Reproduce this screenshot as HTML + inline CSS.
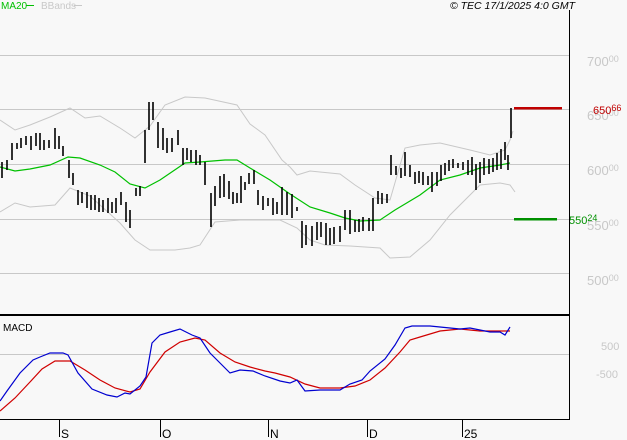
<!DOCTYPE html>
<html><head><meta charset="utf-8"><style>
html,body{margin:0;padding:0;background:#f8f8f8;}
svg{display:block;font-family:"Liberation Sans",sans-serif;}
</style></head><body>
<svg width="627" height="440" viewBox="0 0 627 440" xmlns="http://www.w3.org/2000/svg">
<rect width="627" height="440" fill="#f8f8f8"/>
<g stroke="#c8c8c8" stroke-width="1">
<line x1="0" y1="55.5" x2="569" y2="55.5"/>
<line x1="0" y1="109.5" x2="569" y2="109.5"/>
<line x1="0" y1="164.5" x2="569" y2="164.5"/>
<line x1="0" y1="219.5" x2="569" y2="219.5"/>
<line x1="0" y1="273.5" x2="569" y2="273.5"/>
<line x1="0" y1="354.5" x2="569" y2="354.5"/>
</g>
<g fill="#c8c8c8" font-size="13">
<text x="587" y="66">700<tspan font-size="9" dy="-4">00</tspan></text>
<text x="587" y="120">650<tspan font-size="9" dy="-4">00</tspan></text>
<text x="587" y="175">600<tspan font-size="9" dy="-4">00</tspan></text>
<text x="587" y="230">550<tspan font-size="9" dy="-4">00</tspan></text>
<text x="587" y="285">500<tspan font-size="9" dy="-4">00</tspan></text>
<text x="601" y="350" font-size="11">500</text>
<text x="596" y="378" font-size="11">-500</text>
</g>
<!-- bands -->
<polyline fill="none" stroke="#c8c8c8" stroke-width="1" points="0,120 15,130 30,125 50,117 70,108 85,118 100,116 120,128 135,138 150,126 165,105 185,97 205,98 237,105 250,124 265,135 282,160 290,167 297,175 310,171 340,174 355,185 375,198 390,200 405,148 420,145 440,143 470,150 490,155 505,150 510,140 513,131"/>
<polyline fill="none" stroke="#c8c8c8" stroke-width="1" points="0,212 15,203 30,207 55,205 70,188 90,196 100,205 120,223 135,240 150,250 175,250 190,248 200,245 215,222 240,220 280,220 297,228 310,240 325,245 350,246 380,248 390,258 410,257 430,240 450,215 465,200 480,185 500,183 510,185 515,192"/>
<polyline fill="none" stroke="#00c000" stroke-width="1.2" points="0,167 15,171 30,169 50,165 68,157 80,158 100,165 115,172 130,184 145,188 160,180 185,163 200,162 225,160 237,160 250,168 270,180 290,194 310,207 330,213 345,218 360,221 380,220 395,210 420,195 440,180 460,175 480,168 500,165 510,163"/>
<!-- bars -->
<path fill="none" stroke="#000" stroke-width="1.6" d="
M2 162V178M7 160V170M12 143V160M17 143V149M21 138V148M26 136V145M31 136V150M36 133V146M40 133V150M44 140V150M49 140V148M55 128V149M59 136V149M63 146V156M69 160V178M73 173V185M78 190V205M82 192V203M87 192V208M91 195V210M95 195V210M99 198V212M103 200V212M108 198V213M112 202V213M116 198V213M121 192V205M126 202V222M130 210V228M136 188V196M140 186V196M145 130V163M149 102V130M153 102V120M158 122V148M163 128V150M167 138V153M172 138V152M178 130V145M183 148V165M187 148V160M191 150V162M196 150V165M200 155V165M205 162V185M211 193V227M215 186V206M220 176V198M224 174V197M229 181V199M233 192V204M237 193V203M241 176V203M245 182V190M249 173V184M254 170V184M258 190V205M263 196V210M268 198V206M273 198V215M277 202V214M282 187V215M287 192V215M292 194V218M297 207V211M302 221V248M306 225V245M312 226V246M317 222V240M321 222V237M326 223V245M330 228V245M334 227V244M340 226V242M345 210V230M350 210V234M355 220V232M359 219V232M363 217V231M369 218V231M373 198V231M378 191V204M382 193V204M387 194V203M391 155V175M396 166V175M401 168V178M405 152V176M410 165V177M415 172V184M419 171V183M423 172V185M428 176V185M432 172V192M437 172V186M441 165V181M445 163V175M449 160V171M453 159V168M458 163V168M463 162V170M468 160V175M472 157V175M476 164V190M480 162V183M484 158V175M489 159V174M493 158V172M497 153V170M501 149V169M505 142V160M508 155V170M511 108V138"/>
<!-- price markers -->
<rect x="514" y="107" width="48" height="2.5" fill="#c00000"/>
<rect x="514" y="218" width="43" height="2.5" fill="#009000"/>
<text x="593" y="114" font-size="11" fill="#c00000">650<tspan font-size="9" dy="-3">66</tspan></text>
<text x="569" y="224" font-size="11" fill="#009000">550<tspan font-size="9" dy="-3">24</tspan></text>
<!-- frame -->
<line x1="569.5" y1="10" x2="569.5" y2="419" stroke="#000" stroke-width="1"/>
<rect x="0" y="314" width="570" height="2" fill="#000"/>
<line x1="0" y1="419.5" x2="570" y2="419.5" stroke="#000" stroke-width="1"/>
<g stroke="#000" stroke-width="1">
<line x1="59.5" y1="419" x2="59.5" y2="437"/>
<line x1="160.5" y1="419" x2="160.5" y2="437"/>
<line x1="268.5" y1="419" x2="268.5" y2="437"/>
<line x1="367.5" y1="419" x2="367.5" y2="437"/>
<line x1="462.5" y1="419" x2="462.5" y2="437"/>
</g>
<g font-size="12" fill="#000">
<text x="61" y="438">S</text>
<text x="162" y="438">O</text>
<text x="270" y="438">N</text>
<text x="369" y="438">D</text>
<text x="464" y="438">25</text>
</g>
<!-- MACD -->
<polyline fill="none" stroke="#d00000" stroke-width="1.2" points="0,411 15,398 30,382 42,369 55,361 70,361 85,370 100,380 115,388 130,392 140,389 150,372 165,352 180,342 195,338 205,340 220,353 235,362 250,367 265,371 275,373 290,377 305,384 320,388 340,388 355,386 370,380 385,368 400,352 410,340 420,337 440,331 460,329 480,331 500,331 510,331"/>
<polyline fill="none" stroke="#0000d0" stroke-width="1.2" points="0,401 7,391 20,373 33,360 40,357 50,353 63,353 68,355 78,373 92,389 107,395 117,397 125,393 130,394 140,386 146,377 152,343 160,335 170,332 180,329 192,335 200,338 210,353 218,361 230,373 240,370 253,371 265,376 280,381 290,383 297,380 305,391 320,390 340,390 350,384 362,380 370,371 385,359 395,345 405,328 412,326 420,326 430,326 440,327 460,329 470,328 490,332 500,332 505,335 510,327"/>
<text x="3" y="331" font-size="10" fill="#000">MACD</text>
<!-- header -->
<text x="1" y="9" font-size="10" fill="#00c000">MA20</text>
<line x1="26" y1="5.5" x2="34" y2="5.5" stroke="#00c000"/>
<text x="41" y="9" font-size="10" fill="#c8c8c8">BBands</text>
<line x1="74" y1="5.5" x2="82" y2="5.5" stroke="#c8c8c8"/>
<text x="575" y="9" font-size="10.5" font-style="italic" fill="#000" text-anchor="end">© TEC 17/1/2025 4:0 GMT</text>
</svg>
</body></html>
